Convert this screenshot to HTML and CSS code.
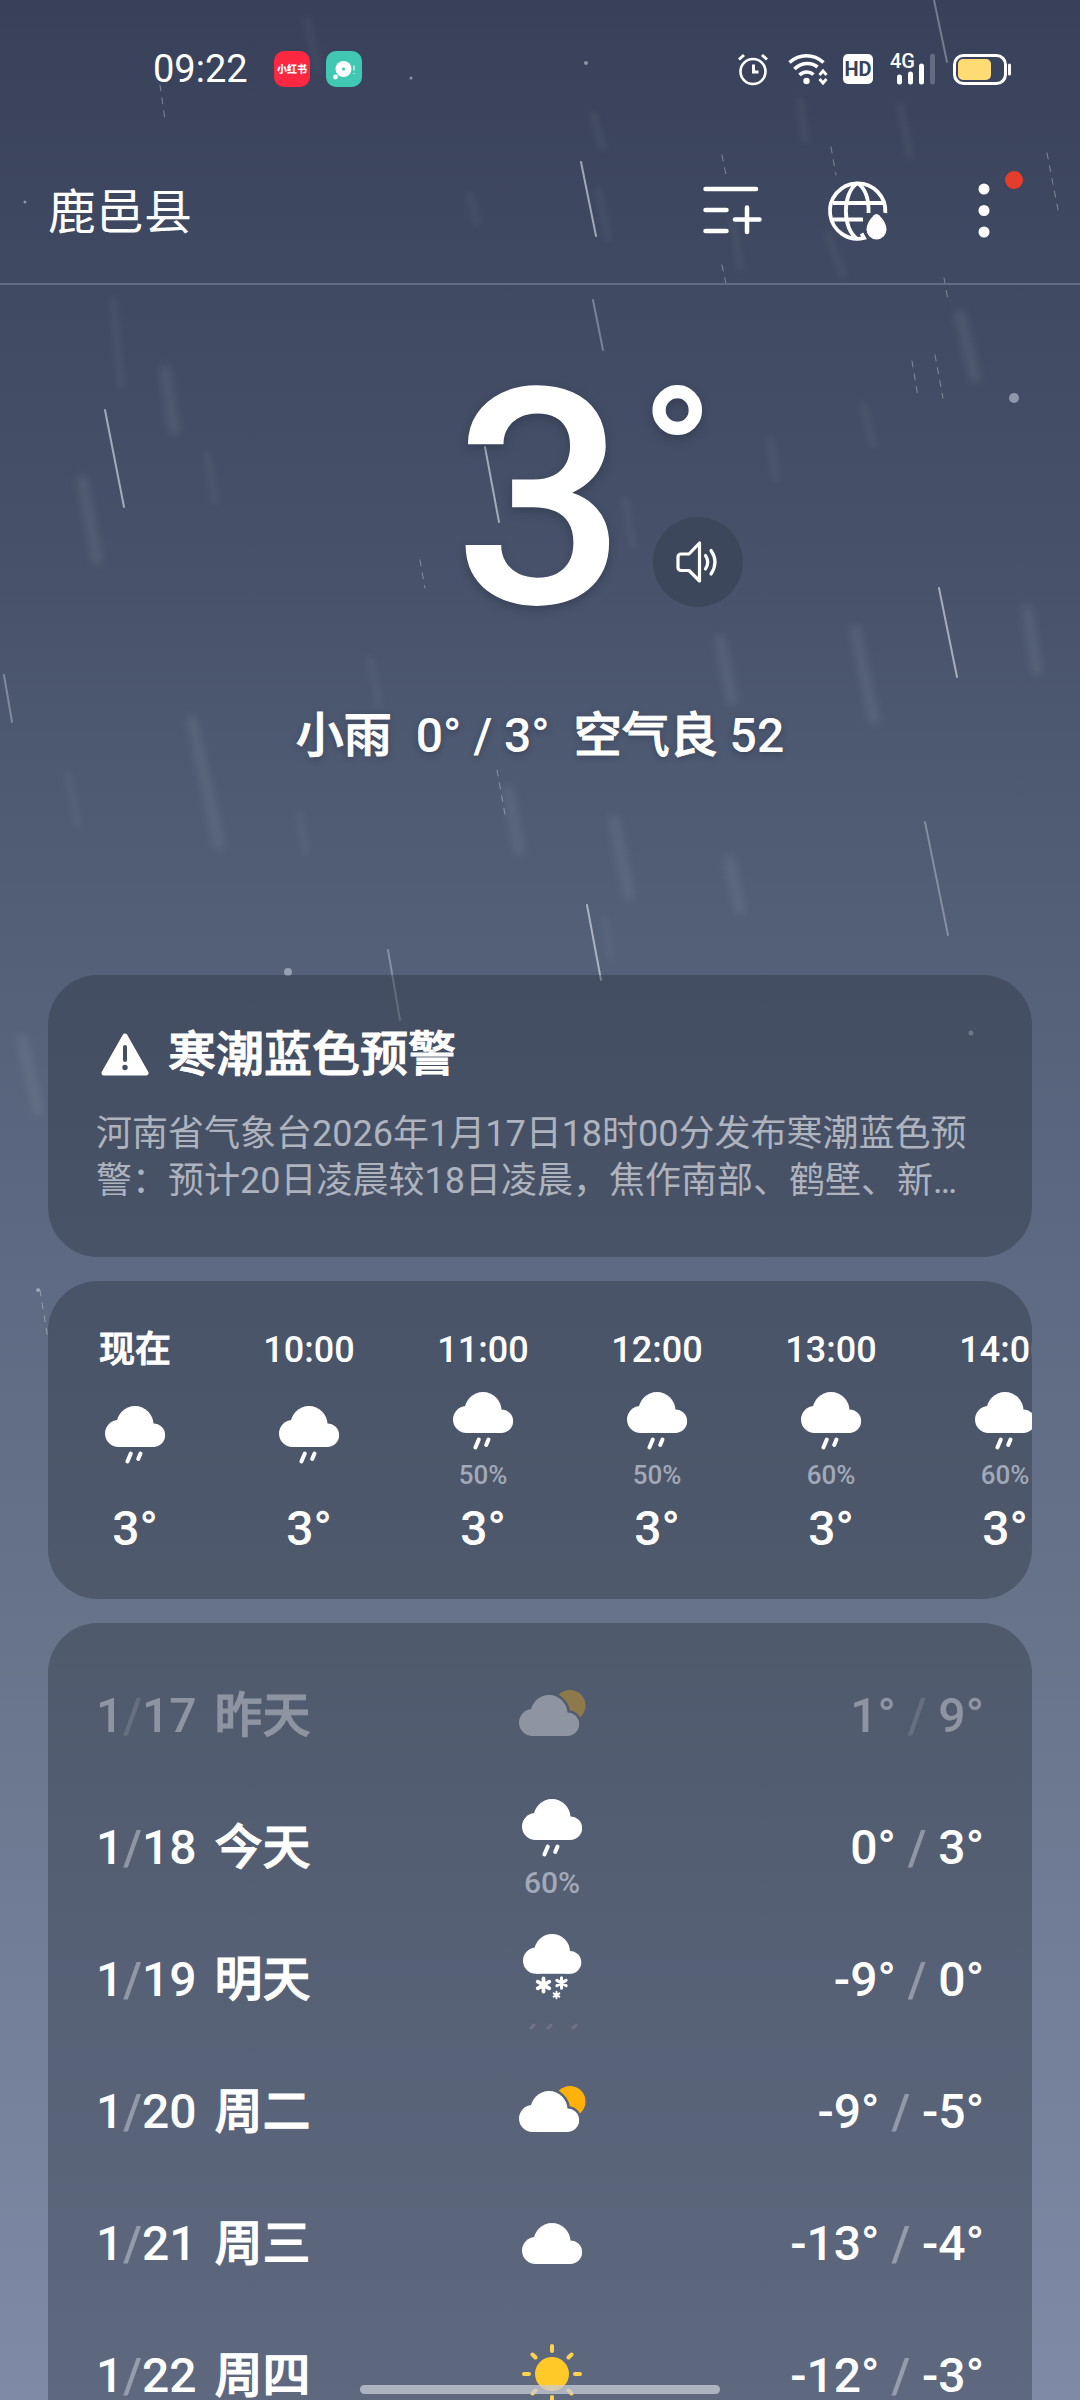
FILE: index.html
```html
<!DOCTYPE html>
<html lang="zh-CN">
<head>
<meta charset="utf-8">
<meta name="viewport" content="width=device-width, initial-scale=1">
<title>鹿邑县 天气</title>
<link rel="stylesheet" href="styles.css">
</head>
<body>
<svg class="defs" width="0" height="0" aria-hidden="true">
  <defs>
    <g id="cloud">
      <circle cx="30" cy="18.5" r="18.5"/>
      <circle cx="13.5" cy="27.5" r="13.5"/>
      <circle cx="48.3" cy="29.2" r="11.8"/>
      <rect x="13.5" y="18" width="34.8" height="23"/>
    </g>
    <g id="drops" stroke="#fff" stroke-width="4" stroke-linecap="round">
      <path d="M25.8 47.5 22.4 55.5M35.5 47.5 33.2 53"/>
    </g>
    <g id="flake" stroke="#fff" stroke-width="3.8" stroke-linecap="round">
      <path d="M0-6.5V6.5M-5.8-3.3 5.8 3.3M-5.8 3.3 5.8-3.3"/>
    </g>
    <mask id="behind-cloud" maskUnits="userSpaceOnUse" x="-5" y="-15" width="80" height="70">
      <rect x="-5" y="-15" width="80" height="70" fill="#fff"/>
      <use href="#cloud" fill="#000" stroke="#000" stroke-width="5"/>
    </mask>
    <g id="partly">
      <circle cx="51" cy="10.5" r="15.5" fill="#ffb10a" mask="url(#behind-cloud)"/>
      <use href="#cloud" fill="#fff"/>
    </g>
  </defs>
</svg>

<div class="screen">
  <svg class="rain" viewBox="0 0 1080 2400" preserveAspectRatio="xMidYMin slice" aria-hidden="true">
    <g class="rain-far">
      <path d="M307 20 318 70M593 115 603 148M598 190 608 238M733 220 740 268M828 235 843 275M900 105 910 155M800 100 805 140M470 195 477 223M113 300 121 385M207 455 215 500M863 405 873 445M770 440 776 478M625 500 633 545M370 660 379 705M299 815 306 852M68 775 78 825M605 920 610 955"/>
    </g>
    <g class="rain-mid">
      <path d="M165 370 174 430M82 480 97 560M960 315 975 378M720 640 732 700M855 630 874 720M1027 610 1037 670M192 720 219 845M508 790 519 850M614 820 629 895M729 860 740 910M22 1040 38 1110"/>
    </g>
    <g class="rain-near">
      <path d="M105 410 124 507M939 588 957 677M485 447 499 522M587 905 601 980M581 162 596 236"/>
    </g>
    <g class="rain-near dim">
      <path d="M593 300 603 350M925 822 948 935M388 950 400 1020M934 0 947 62M4 675 12 722"/>
    </g>
    <g class="rain-near dashed">
      <path d="M912 361 918 397M935 355 943 398M420 560 425 588M497 770 506 820M1047 153 1059 215M722 155 727 180M831 147 836 175M722 265 726 284M944 278 948 300M160 85 165 120M40 1290 48 1340"/>
    </g>
    <g class="rain-spots">
      <circle cx="1014" cy="398" r="5"/><circle cx="288" cy="972" r="4"/><circle cx="586" cy="63" r="2"/><circle cx="411" cy="78" r="1.5"/><circle cx="38" cy="1290" r="2"/><circle cx="25" cy="202" r="1.5"/><circle cx="971" cy="1033" r="2.5"/>
    </g>
  </svg>

  <div class="statusbar">
    <div class="status-left">
      <time class="clock">09:22</time>
      <svg class="app-icon" width="36" height="36" viewBox="0 0 36 36" role="img" aria-label="小红书">
        <rect width="36" height="36" rx="10" fill="#fc2741"/>
        <text x="18" y="22" text-anchor="middle" font-size="10" font-weight="900" fill="#fff">小红书</text>
      </svg>
      <svg class="app-icon" width="36" height="36" viewBox="0 0 36 36" aria-hidden="true">
        <rect width="36" height="36" rx="10" fill="#41c8b2"/>
        <circle cx="17.5" cy="18" r="8" fill="#fff"/><circle cx="17.5" cy="18" r="1.6" fill="#41c8b2"/>
        <circle cx="9.5" cy="26" r="2.4" fill="#fff"/>
        <path d="M28 14.5V19.5M28 22V23" stroke="#c5f0e8" stroke-width="1.5"/>
      </svg>
    </div>
    <div class="status-right">
      <svg width="30" height="32" viewBox="0 0 30 32" fill="none" stroke="#fff" stroke-width="2.6" aria-label="闹钟">
        <circle cx="15" cy="18.5" r="12.5"/><path d="M15.5 11.5V19H20.5" stroke-width="3"/><path d="M1 6.5 6 2M24 2 29 6.5" stroke-width="3"/>
      </svg>
      <svg class="wifi" width="40" height="32" viewBox="0 0 40 32" fill="none" stroke="#fff" aria-label="Wi-Fi">
        <path d="M1.500 9.500C11.500 .5 25.500 .5 35.500 9.500M6.500 16C13.500 9 23.500 9 29.500 14M11.500 22C15.500 18 21.500 18 25.500 21.500" stroke-width="3.6"/>
        <circle cx="18.5" cy="28" r="3.2" fill="#fff" stroke="none"/>
        <path d="M31.500 22 35 18 38.500 22M31.500 26 35 30 38.500 26" stroke-width="2.8"/>
      </svg>
      <svg class="hd" width="30" height="30" viewBox="0 0 30 30" aria-label="HD">
        <rect width="30" height="30" rx="5" fill="#fff"/>
        <text x="15" y="22" text-anchor="middle" font-size="20" font-weight="700" fill="#384259">HD</text>
      </svg>
      <svg class="signal" width="44" height="32" viewBox="0 0 44 32" aria-label="4G">
        <text x="-1" y="15" font-size="20" font-weight="500" fill="#fff">4G</text>
        <path d="M8.500 24V29M19.500 21V29M30.500 13V29" stroke="#fff" stroke-width="5" stroke-linecap="round"/>
        <path d="M41.500 3V29" stroke="#626b80" stroke-width="5" stroke-linecap="round"/>
      </svg>
      <svg class="battery" width="58" height="31" viewBox="0 0 58 31" aria-label="电量">
        <rect x="1.5" y="1.5" width="51" height="28" rx="9" fill="none" stroke="#fff" stroke-width="3"/>
        <rect x="5" y="5" width="33" height="21" rx="5" fill="#ffdc73"/>
        <path d="M56.500 11V20" stroke="#fff" stroke-width="3" stroke-linecap="round"/>
      </svg>
    </div>
  </div>

  <header class="topbar">
    <h1 class="city">鹿邑县</h1>
    <nav class="actions">
      <button class="icon-button" type="button" aria-label="添加城市">
        <svg width="60" height="60" viewBox="0 0 60 60" fill="none" stroke="#fff" stroke-width="4.500" stroke-linecap="round">
          <path d="M3.500 8H54M3.500 29H24.500M3.500 50H24.500M33 38.500H57.500M45 26.500V51"/>
        </svg>
      </button>
      <button class="icon-button" type="button" aria-label="全球降水">
        <svg width="60" height="60" viewBox="0 0 60 60" fill="none" stroke="#fff" stroke-width="3.800">
          <path d="M57.300 32A27.700 27.700 0 1 0 36 57L33.500 52.500"/>
          <path d="M29.500 2C14 12 14 48 29.500 58M29.500 2C38 8 41 20 40.500 32M5 22H55M5 38.500H35"/>
          <path d="M48.500 33C51 33 58.500 41 58.500 48.500A10 10 0 0 1 38.500 48.500C38.500 41 46 33 48.500 33Z" fill="#fff" stroke="none"/>
        </svg>
      </button>
      <button class="icon-button more" type="button" aria-label="更多">
        <svg width="60" height="60" viewBox="0 0 60 60" fill="#fff">
          <circle cx="30" cy="8" r="5.5"/><circle cx="30" cy="29.5" r="5.5"/><circle cx="30" cy="51" r="5.5"/>
        </svg>
        <span class="badge"></span>
      </button>
    </nav>
  </header>

  <main>
    <section class="hero">
      <div class="reading">
        <span class="temp">3</span>
        <div class="reading-side">
          <span class="degree">°</span>
          <button class="speak" type="button" aria-label="语音播报">
            <svg width="44" height="44" viewBox="0 0 44 44" fill="none" stroke="#fff" stroke-width="3.200" stroke-linejoin="round" stroke-linecap="round">
              <path d="M23.500 3V41L13 30.500H5A3 3 0 0 1 2 27.500V17A3 3 0 0 1 5 14H13ZM29.500 15.500Q34 22 29.500 29M35 10.500Q43 22 35 34"/>
            </svg>
          </button>
        </div>
      </div>
      <p class="summary"><span class="han">小雨</span><span>0° / 3°</span><span><span class="han">空气良</span> 52</span></p>
    </section>

    <section class="card alert">
      <h2 class="alert-title">
        <svg width="50" height="44" viewBox="0 0 50 44" aria-hidden="true">
          <path d="M25 3 46 40H4Z" fill="#fff" stroke="#fff" stroke-width="5" stroke-linejoin="round"/>
          <path d="M25 14V27" stroke="#454f63" stroke-width="4" stroke-linecap="round"/><circle cx="25" cy="34.5" r="2.7" fill="#454f63"/>
        </svg>
        <span class="han">寒潮蓝色预警</span>
      </h2>
      <p class="alert-body">河南省气象台2026年1月17日18时00分发布寒潮蓝色预警：预计20日凌晨较18日凌晨，焦作南部、鹤壁、新…</p>
    </section>

    <section class="card hourly" aria-label="逐小时预报">
      <ol class="hours">
        <li class="hour"><time class="han">现在</time><div class="sky"><svg class="wx rainy" viewBox="0 0 60 58"><use href="#cloud" fill="#fff"/><use href="#drops"/></svg></div><b>3°</b></li>
        <li class="hour"><time>10:00</time><div class="sky"><svg class="wx rainy" viewBox="0 0 60 58"><use href="#cloud" fill="#fff"/><use href="#drops"/></svg></div><b>3°</b></li>
        <li class="hour"><time>11:00</time><div class="sky"><svg class="wx rainy" viewBox="0 0 60 58"><use href="#cloud" fill="#fff"/><use href="#drops"/></svg><span class="pop">50%</span></div><b>3°</b></li>
        <li class="hour"><time>12:00</time><div class="sky"><svg class="wx rainy" viewBox="0 0 60 58"><use href="#cloud" fill="#fff"/><use href="#drops"/></svg><span class="pop">50%</span></div><b>3°</b></li>
        <li class="hour"><time>13:00</time><div class="sky"><svg class="wx rainy" viewBox="0 0 60 58"><use href="#cloud" fill="#fff"/><use href="#drops"/></svg><span class="pop">60%</span></div><b>3°</b></li>
        <li class="hour"><time>14:00</time><div class="sky"><svg class="wx rainy" viewBox="0 0 60 58"><use href="#cloud" fill="#fff"/><use href="#drops"/></svg><span class="pop">60%</span></div><b>3°</b></li>
      </ol>
    </section>

    <section class="card daily" aria-label="每日预报">
      <ol class="days">
        <li class="day past">
          <div class="date"><time>1<i>/</i>17</time><span class="han">昨天</span></div>
          <div class="sky"><svg class="wx" viewBox="3 0 60 42"><use href="#partly"/></svg></div>
          <span class="range">1° <i>/</i> 9°</span>
        </li>
        <li class="day">
          <div class="date"><time>1<i>/</i>18</time><span class="han">今天</span></div>
          <div class="sky"><svg class="wx rainy" viewBox="0 0 60 58"><use href="#cloud" fill="#fff"/><use href="#drops"/></svg><span class="pop">60%</span></div>
          <span class="range">0° <i>/</i> 3°</span>
        </li>
        <li class="day">
          <div class="date"><time>1<i>/</i>19</time><span class="han">明天</span></div>
          <div class="sky"><svg class="wx snowy" viewBox="0 0 60 92">
            <use href="#cloud" fill="#fff" transform="translate(1 0) scale(.97)"/>
            <use href="#flake" transform="translate(21.500 51)"/>
            <use href="#flake" transform="translate(39.500 49) scale(.8)"/>
            <use href="#flake" transform="translate(34.500 61) scale(.5)"/>
            <path d="M9 94 12 91M26 94 29 91M51 94 54 91" stroke="#8b8296" stroke-width="3" stroke-linecap="round" opacity=".5"/>
          </svg></div>
          <span class="range">-9° <i>/</i> 0°</span>
        </li>
        <li class="day">
          <div class="date"><time>1<i>/</i>20</time><span class="han">周二</span></div>
          <div class="sky"><svg class="wx" viewBox="3 0 60 42"><use href="#partly"/></svg></div>
          <span class="range">-9° <i>/</i> -5°</span>
        </li>
        <li class="day">
          <div class="date"><time>1<i>/</i>21</time><span class="han">周三</span></div>
          <div class="sky"><svg class="wx" viewBox="0 0 60 42"><use href="#cloud" fill="#fff"/></svg></div>
          <span class="range">-13° <i>/</i> -4°</span>
        </li>
        <li class="day">
          <div class="date"><time>1<i>/</i>22</time><span class="han">周四</span></div>
          <div class="sky"><svg class="wx sunny" viewBox="0 0 60 64">
            <circle cx="30" cy="30" r="17" fill="#ffc928"/>
            <path d="M30 2V7M30 53V58M2 30H7M53 30H58M10.500 10.500 13.500 13.500M46.500 46.500 49.500 49.500M10.500 49.500 13.500 46.500M46.500 13.500 49.500 10.500" stroke="#ffd24d" stroke-width="4" stroke-linecap="round"/>
          </svg></div>
          <span class="range">-12° <i>/</i> -3°</span>
        </li>
      </ol>
    </section>
  </main>
  <div class="home-bar"></div>
</div>
</body>
</html>
```
FILE: styles.css
```css
* { box-sizing: border-box; margin: 0; padding: 0; }

body {
  font-family: Roboto, "Noto Sans CJK SC", sans-serif;
  color: #fff;
  background: #3a435b;
}

button { border: 0; background: none; color: inherit; font: inherit; cursor: pointer; }
ol { list-style: none; }
svg { display: block; flex: none; overflow: visible; }
i { font-style: normal; opacity: .35; }

/* medium weight for Chinese labels */
.han { -webkit-text-stroke: 1px currentColor; }

.defs { position: absolute; }

.screen {
  position: relative;
  isolation: isolate;
  height: 100vh;
  overflow: hidden;
  background: linear-gradient(#384159 0%, #3f4961 11%, #465169 22%, #4d5971 31%, #556179 41%, #5e6a83 53%, #677389 67%, #737f99 83%, #7f8ba6 100%);
}

/* falling rain behind the content */
.rain { position: absolute; inset: 0; z-index: -1; width: 100%; height: 100%; fill: none; stroke-linecap: round; }
.rain-far { stroke: #a9b6c0; stroke-width: 7; opacity: .08; filter: blur(3px); }
.rain-mid { stroke: #a9b6c0; stroke-width: 10; opacity: .14; filter: blur(4px); }
.rain-near { stroke: #e3eaec; stroke-width: 2; opacity: .6; }
.rain-near.dim { opacity: .35; }
.rain-near.dashed { stroke-width: 1; stroke-dasharray: 6 7; opacity: .4; }
.rain-spots { fill: #c3ccd8; opacity: .6; }

/* status bar */
.statusbar {
  display: flex;
  justify-content: space-between;
  align-items: center;
  height: 138px;
  padding: 0 69px 0 153px;
}
.status-left, .status-right { display: flex; align-items: center; }
.clock { margin-right: 26px; font-size: 38px; line-height: 44px; font-weight: 400; }
.app-icon + .app-icon { margin-left: 16px; }
.wifi { margin-left: 20px; }
.hd { margin-left: 15px; }
.signal { margin-left: 18px; }
.battery { margin-left: 18px; }

/* top bar */
.topbar {
  display: flex;
  justify-content: space-between;
  align-items: center;
  height: 147px;
  padding: 0 66px 0 48px;
  border-bottom: 2px solid #626c83;
}
.city { padding-top: 4px; font-size: 48px; line-height: 56px; font-weight: 400; }
.actions { display: flex; gap: 66px; }
.icon-button { position: relative; display: flex; width: 60px; height: 60px; }
.badge { position: absolute; top: -10px; right: -9px; width: 18px; height: 18px; border-radius: 50%; background: #e43d2b; }

/* current weather */
.hero { padding: 97px 48px 211px; }
.reading { display: grid; grid-template-columns: 1fr auto 1fr; grid-template-rows: 225px; }
.temp {
  grid-column: 2;
  font-size: 302px;
  line-height: 236px;
  font-weight: 500;
  text-shadow: 0 4px 10px rgba(30, 38, 54, .35);
}
.reading-side { display: flex; flex-direction: column; justify-content: space-between; align-items: flex-start; padding-left: 27px; }
.degree {
  height: 60px;
  margin-left: -12px;
  font-size: 188px;
  line-height: 148px;
  font-weight: 700;
  text-shadow: 0 4px 10px rgba(30, 38, 54, .35);
}
.speak {
  display: flex;
  justify-content: center;
  align-items: center;
  width: 90px;
  height: 90px;
  border-radius: 50%;
  background: #3d475b;
}
.summary {
  display: flex;
  justify-content: center;
  gap: 24px;
  margin-top: 101px;
  font-size: 48px;
  line-height: 56px;
  font-weight: 500;
  text-shadow: 0 2px 6px rgba(30, 38, 54, .4);
}

/* cards */
.card {
  margin: 0 48px 24px;
  border-radius: 50px;
  background: rgba(38, 46, 60, .37);
  overflow: hidden;
}

.alert { padding: 52px 48px 52px; }
.alert-title {
  display: flex;
  align-items: center;
  gap: 18px;
  padding-left: 4px;
  font-size: 48px;
  line-height: 56px;
  font-weight: 500;
}
.alert-body { margin-top: 28px; font-size: 36px; line-height: 47px; color: #aeb3be; }

.sky { display: flex; flex-direction: column; align-items: center; justify-content: center; }
.wx { width: 60px; height: 42px; }
.wx.rainy { height: 58px; }
.wx.snowy { height: 92px; }
.wx.sunny { height: 64px; }
.pop { font-weight: 500; color: #a2a9b8; }

.hours { display: flex; padding: 48px 0 46px; }
.hour { display: flex; flex-direction: column; align-items: center; flex: 0 0 174px; }
.hour time { font-size: 36px; line-height: 42px; font-weight: 500; }
.hour .sky { height: 134px; }
.hour .wx:only-child { margin-bottom: 6px; }
.hour .pop { margin-top: 16px; font-size: 26px; line-height: 18px; }
.hour b { font-size: 48px; line-height: 48px; font-weight: 500; }

.daily { margin-bottom: 0; }
.days { padding: 27px 48px; }
.day {
  display: grid;
  grid-template-columns: 402px 108px 1fr;
  align-items: center;
  height: 132px;
  font-size: 48px;
  line-height: 56px;
  font-weight: 500;
}
.date { display: flex; gap: 18px; }
.day .pop { margin-top: 12px; font-size: 30px; line-height: 28px; }
.range { text-align: right; }
.past { opacity: .35; }

/* system gesture bar */
.home-bar {
  position: absolute;
  left: 50%;
  bottom: 6px;
  width: 360px;
  height: 9px;
  margin-left: -180px;
  border-radius: 5px;
  background: rgba(200, 204, 213, .75);
}
```
